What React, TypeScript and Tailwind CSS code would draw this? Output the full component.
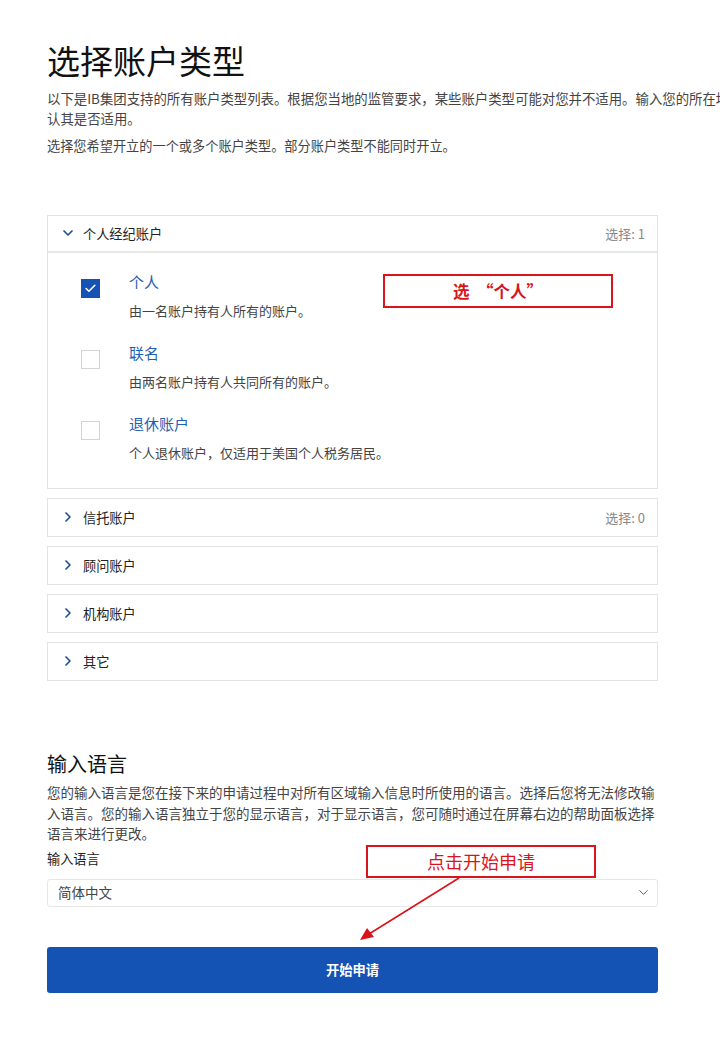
import { ChevronDown, ChevronRight, Check } from "lucide-react";

const FONT = { fontFamily: '"Noto Sans CJK SC", "Noto Sans", sans-serif' };

interface AccountOption {
  title: string;
  desc: string;
  checked: boolean;
}

const brokerOptions: AccountOption[] = [
  { title: "个人", desc: "由一名账户持有人所有的账户。", checked: true },
  { title: "联名", desc: "由两名账户持有人共同所有的账户。", checked: false },
  { title: "退休账户", desc: "个人退休账户，仅适用于美国个人税务居民。", checked: false },
];

const collapsed = [
  { title: "信托账户", count: "选择: 0" },
  { title: "顾问账户" },
  { title: "机构账户" },
  { title: "其它" },
];

const OptionRow = ({ option }: { option: AccountOption }) => (
  <div className="flex h-[71px]">
    <div className="w-[52px] flex justify-end pt-[7px]">
      {option.checked ? (
        <div className="w-[19px] h-[19px] bg-[#1652b5] flex items-center justify-center">
          <Check className="w-[13px] h-[13px] text-white" strokeWidth={3} />
        </div>
      ) : (
        <div className="w-[19px] h-[19px] border-[1.5px] border-[#d4d4d4] bg-white" />
      )}
    </div>
    <div className="pl-[29px] flex flex-col">
      <span className="text-[15px] leading-[20px] text-[#1f5fb4]">{option.title}</span>
      <span className="mt-[9px] text-[13px] leading-[20px] text-[#444]">{option.desc}</span>
    </div>
  </div>
);

export default function App() {
  return (
    <div className="relative w-[720px] h-[1040px] overflow-hidden bg-white text-[#222]" style={FONT}>
      <div className="pl-[47px] pt-[40px] w-[658px]">
        <h1 className="text-[33px] leading-[40px] text-[#111] whitespace-nowrap">选择账户类型</h1>

        <p className="mt-[8px] text-[13.4px] leading-[20px] text-[#444] whitespace-nowrap">
          <span className="block">以下是IB集团支持的所有账户类型列表。根据您当地的监管要求，某些账户类型可能对您并不适用。输入您的所在地区以确</span>
          <span className="block">认其是否适用。</span>
        </p>
        <p className="mt-[8px] text-[13.2px] leading-[20px] text-[#444] whitespace-nowrap">
          选择您希望开立的一个或多个账户类型。部分账户类型不能同时开立。
        </p>

        <div className="mt-[59px] w-[611px] flex flex-col gap-[9px]">
          <div className="border border-[#e3e3e3]">
            <div className="h-[37px] flex items-center justify-between px-[12px] border-b-2 border-[#e8e8e8]">
              <div className="flex items-center gap-[7px]">
                <ChevronDown className="w-[16px] h-[16px] text-[#1d4f91]" strokeWidth={2.5} />
                <span className="text-[13.2px] text-[#222]">个人经纪账户</span>
              </div>
              <span className="text-[13px] text-[#888]">选择: 1</span>
            </div>
            <div className="pt-[19px] pb-[3px]">
              {brokerOptions.map((o) => (
                <OptionRow key={o.title} option={o} />
              ))}
            </div>
          </div>

          {collapsed.map((c) => (
            <div
              key={c.title}
              className="h-[39px] border border-[#e3e3e3] flex items-center justify-between px-[12px]"
            >
              <div className="flex items-center gap-[7px]">
                <ChevronRight className="w-[16px] h-[16px] text-[#1d4f91]" strokeWidth={2.5} />
                <span className="text-[13.2px] text-[#222]">{c.title}</span>
              </div>
              {c.count && <span className="text-[13px] text-[#888]">{c.count}</span>}
            </div>
          ))}
        </div>

        <h2 className="mt-[69px] text-[20px] leading-[28px] text-[#111]">输入语言</h2>
        <p className="mt-[4px] w-[615px] text-[13.5px] leading-[20.5px] text-[#444]">
          您的输入语言是您在接下来的申请过程中对所有区域输入信息时所使用的语言。选择后您将无法修改输入语言。您的输入语言独立于您的显示语言，对于显示语言，您可随时通过在屏幕右边的帮助面板选择语言来进行更改。
        </p>

        <div className="mt-[5px] text-[13.2px] leading-[20px] text-[#222]">输入语言</div>
        <div className="mt-[10px] w-[611px] h-[28px] border border-[#e6e6e6] rounded-[3px] flex items-center justify-between pl-[10px] pr-[6px]">
          <span className="text-[13.5px] text-[#444]">简体中文</span>
          <ChevronDown className="w-[15px] h-[15px] text-[#555]" strokeWidth={1.5} />
        </div>

        <button className="mt-[40px] w-[611px] h-[46px] rounded-[3px] bg-[#1452b3] text-white text-[13.3px] font-semibold">
          开始申请
        </button>
      </div>

      {/* annotations */}
      <div className="absolute left-[383px] top-[274px] w-[230px] h-[34px] border-2 border-[#d9141b] flex items-center justify-center text-[16.5px] font-semibold text-[#d9141b]">
        选&nbsp;&nbsp;“个人”
      </div>
      <div className="absolute left-[366px] top-[845px] w-[230px] h-[33px] border-2 border-[#d9141b] bg-white flex items-center justify-center text-[18px] text-[#d9141b]">
        点击开始申请
      </div>
      <svg className="absolute left-[355px] top-[876px]" width="110" height="68" viewBox="0 0 110 68">
        <line x1="104" y1="2" x2="14" y2="58" stroke="#d9141b" strokeWidth="1.6" />
        <polygon points="5,64 12,52 19,61" fill="#d9141b" />
      </svg>
    </div>
  );
}
